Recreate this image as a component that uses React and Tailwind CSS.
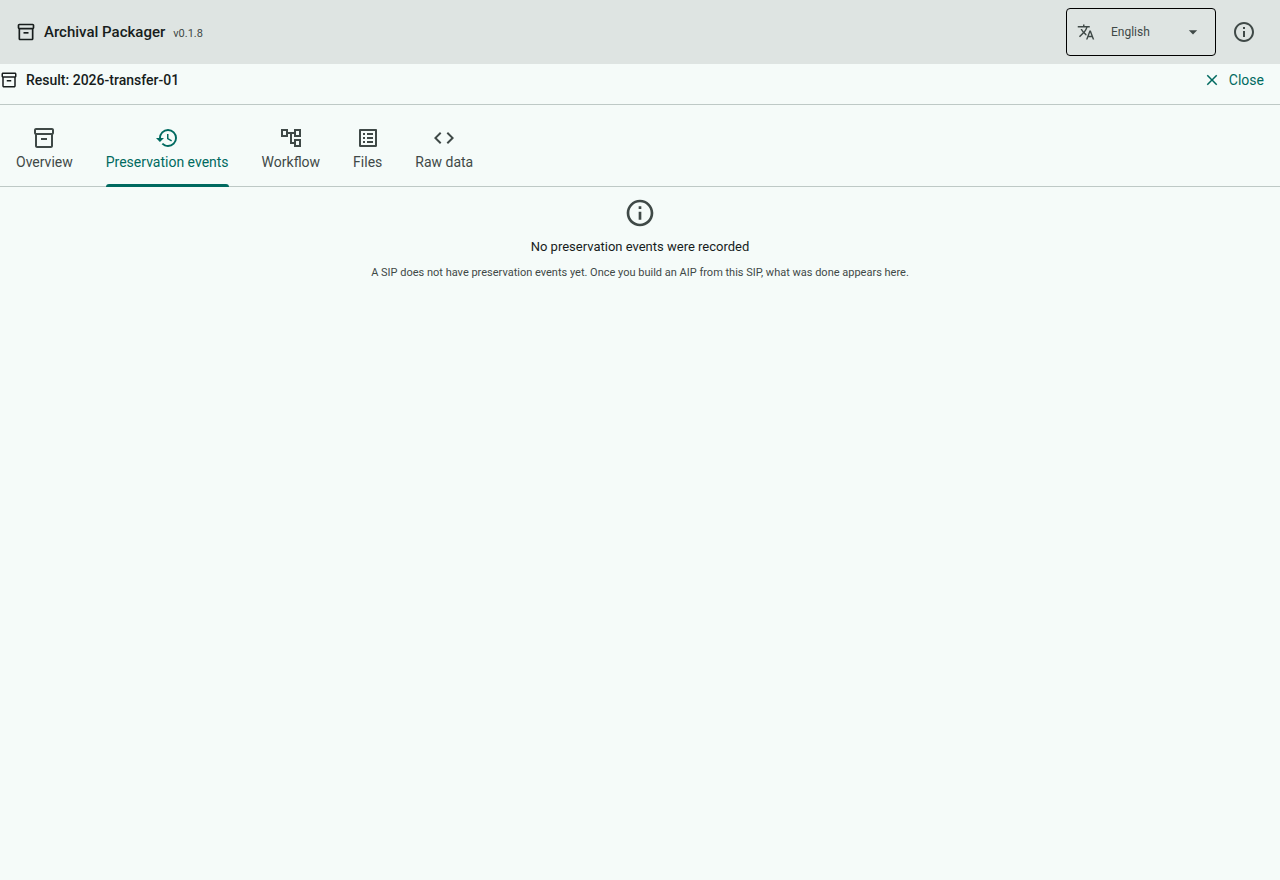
import { useState } from "react";
import {
  MdArrowDropDown,
  MdClose,
  MdCode,
  MdHistory,
  MdInfoOutline,
  MdOutlineAccountTree,
  MdOutlineInventory2,
  MdOutlineListAlt,
  MdTranslate,
} from "react-icons/md";

const tabs = [
  { id: "overview", label: "Overview", icon: MdOutlineInventory2 },
  { id: "events", label: "Preservation events", icon: MdHistory },
  { id: "workflow", label: "Workflow", icon: MdOutlineAccountTree },
  { id: "files", label: "Files", icon: MdOutlineListAlt },
  { id: "raw", label: "Raw data", icon: MdCode },
];

const AppBar = () => (
  <header className="flex h-16 items-center justify-between bg-[#dee4e2] px-4">
    <div className="flex items-center gap-2">
      <MdOutlineInventory2 className="h-5 w-5" />
      <div className="flex items-baseline gap-2">
        <h1 className="text-[15px] font-medium">Archival Packager</h1>
        <span className="text-[11px] text-[#3f4947]">v0.1.8</span>
      </div>
    </div>
    <div className="flex items-center gap-2">
      <label className="flex h-12 w-[150px] items-center rounded border border-black pl-2.5 pr-3 text-[#3f4947]">
        <MdTranslate className="h-[18px] w-[18px] shrink-0" />
        <select
          aria-label="Language"
          className="ml-4 min-w-0 flex-1 appearance-none bg-transparent text-xs text-[#3f4947] outline-none"
        >
          <option>English</option>
        </select>
        <MdArrowDropDown className="h-5 w-5 shrink-0" />
      </label>
      <button
        type="button"
        aria-label="About"
        className="flex h-10 w-10 items-center justify-center text-[#3f4947]"
      >
        <MdInfoOutline className="h-6 w-6" />
      </button>
    </div>
  </header>
);

const ResultBar = () => (
  <div className="flex h-[41px] items-center justify-between border-b border-[#bec9c6] pb-2 pr-4">
    <div className="flex items-center gap-2">
      <MdOutlineInventory2 className="h-[18px] w-[18px]" />
      <h2 className="text-sm font-medium">Result: 2026-transfer-01</h2>
    </div>
    <button
      type="button"
      className="flex items-center gap-2 text-sm text-[#006a60]"
    >
      <MdClose className="h-[18px] w-[18px]" />
      Close
    </button>
  </div>
);

const TabBar = ({ active, onChange }) => (
  <nav
    role="tablist"
    className="flex gap-px border-b border-[#bec9c6] pt-[21px]"
  >
    {tabs.map(({ id, label, icon: Icon }) => (
      <button
        key={id}
        type="button"
        role="tab"
        aria-selected={active === id}
        onClick={() => onChange(id)}
        className={`-mb-px px-4 text-sm ${
          active === id ? "text-[#006a60]" : "text-[#3f4947]"
        }`}
      >
        <span className="flex flex-col items-center">
          <Icon className="h-6 w-6" />
          <span className="mt-0.5">{label}</span>
          <span
            className={`mt-3 h-[3px] w-full rounded-t-[3px] ${
              active === id ? "bg-[#006a60]" : ""
            }`}
          />
        </span>
      </button>
    ))}
  </nav>
);

const EmptyState = () => (
  <main className="flex flex-col items-center px-4 pt-2.5 text-center">
    <MdInfoOutline className="h-8 w-8 text-[#3f4947]" />
    <p className="mt-2 text-[13px] leading-5">
      No preservation events were recorded
    </p>
    <p className="mt-2 text-[11px] leading-4 text-[#3f4947]">
      A SIP does not have preservation events yet. Once you build an AIP from
      this SIP, what was done appears here.
    </p>
  </main>
);

export default function App() {
  const [active, setActive] = useState("events");

  return (
    <div className="min-h-screen bg-[#f5fbf9] font-[Roboto,sans-serif] text-[#171d1c]">
      <AppBar />
      <ResultBar />
      <TabBar active={active} onChange={setActive} />
      <EmptyState />
    </div>
  );
}
